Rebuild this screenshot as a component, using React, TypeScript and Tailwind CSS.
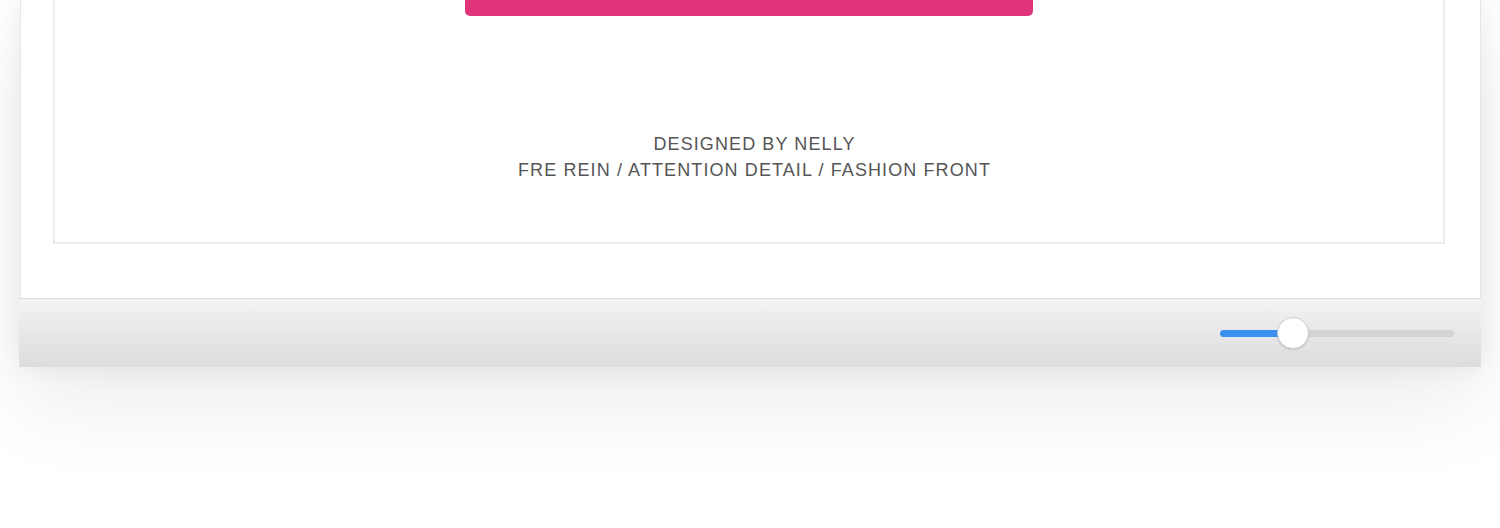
import React from 'react'

const ZoomSlider = ({ value }: { value: number }) => {
    return (
        <div className="relative w-[234px] h-[32px] flex items-center">
            <div className="w-full h-[7px] rounded-full bg-[#d4d3d5]"></div>
            <div className="absolute left-0 h-[7px] rounded-full bg-[#3a8ff0]" style={{ width: `${value * 234}px` }}></div>
            <div
                className="absolute w-[32px] h-[32px] rounded-full bg-white border border-[#cfcfcf] shadow-[0_1px_2px_rgba(0,0,0,0.15)]"
                style={{ left: `${value * 234 - 16}px` }}
            ></div>
        </div>
    )
}

const App = () => {
    return (
        <div className="w-[1500px] h-[528px] bg-white overflow-hidden font-['Liberation_Sans',Arial,sans-serif]">
            <div className="ml-[20px] w-[1461px] shadow-[0_40px_80px_rgba(0,0,0,0.07),0_0_26px_rgba(0,0,0,0.07)]">
                <div className="bg-white border-l border-r border-[#e6e6e6] pl-[32px] pr-[35px] pb-[54px]">
                    <div className="border-2 border-t-0 border-[#ececec] h-[244px] flex flex-col items-center">
                        <div className="w-[568px] h-[16px] bg-[#e0347b] rounded-b-[5px]"></div>
                        <div className="mt-[115px] ml-[11px] text-center text-[#555] text-[18px] leading-[26px] tracking-[1.1px]">
                            <div>DESIGNED BY NELLY</div>
                            <div>FRE REIN / ATTENTION DETAIL / FASHION FRONT</div>
                        </div>
                    </div>
                </div>
                <div className="-ml-[1px] h-[69px] border-t border-[#d9d9d9] bg-gradient-to-b from-[#f3f3f4] to-[#dcdbdd] flex items-center justify-end pr-[27px]">
                    <ZoomSlider value={0.31} />
                </div>
            </div>
        </div>
    )
}

export default App
